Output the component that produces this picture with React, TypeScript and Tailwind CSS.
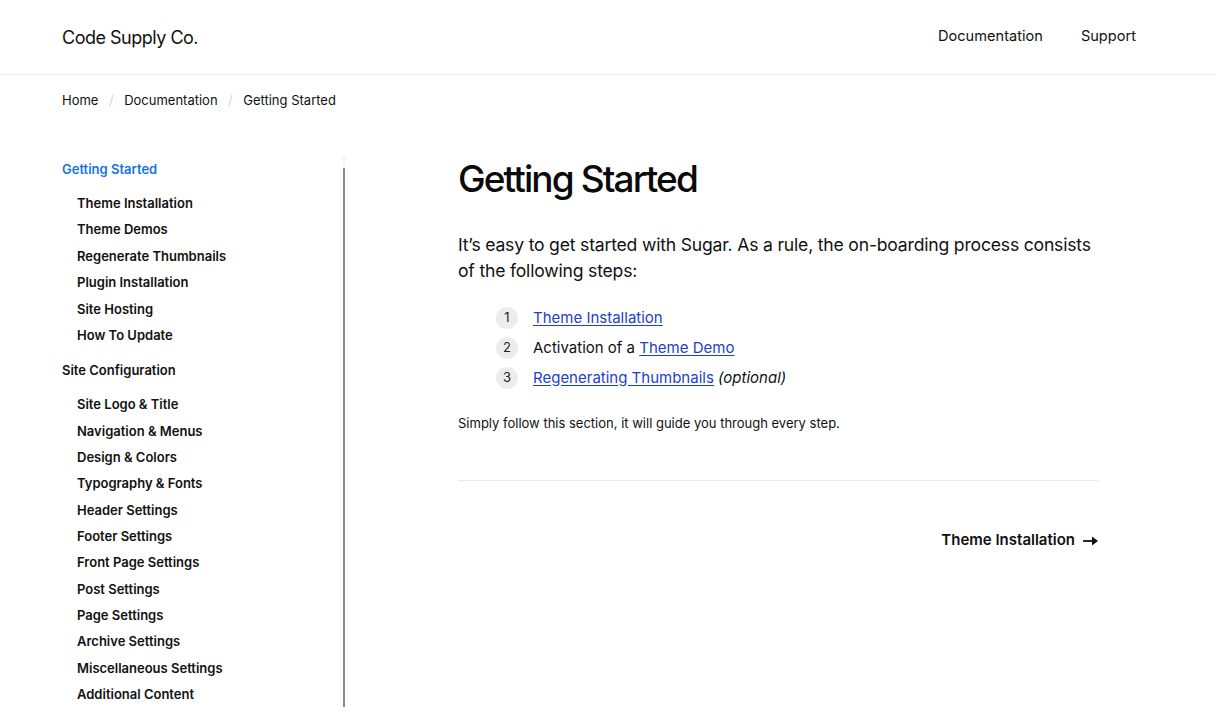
const gettingStarted = [
  "Theme Installation",
  "Theme Demos",
  "Regenerate Thumbnails",
  "Plugin Installation",
  "Site Hosting",
  "How To Update",
];

const siteConfig = [
  "Site Logo & Title",
  "Navigation & Menus",
  "Design & Colors",
  "Typography & Fonts",
  "Header Settings",
  "Footer Settings",
  "Front Page Settings",
  "Post Settings",
  "Page Settings",
  "Archive Settings",
  "Miscellaneous Settings",
  "Additional Content",
];

const Step = ({ n, children }: { n: number; children: React.ReactNode }) => (
  <li className="flex items-center gap-[15px] h-[30px]">
    <span className="flex h-[22px] w-[22px] items-center justify-center rounded-full bg-[#ececef] text-[13px] text-[#222]">
      {n}
    </span>
    <span>{children}</span>
  </li>
);

const App = () => {
  return (
    <div className="min-h-screen w-full bg-white text-[#111] font-['Inter',sans-serif]">
      <header className="flex h-[75px] items-center justify-between border-b border-[#ebebeb] px-[62px]">
        <a href="#" className="text-[18px] tracking-[-0.5px] text-[#111]">
          Code Supply Co.
        </a>
        <nav className="flex items-center gap-[38px] pr-[18px] text-[14.6px] text-[#111]">
          <a href="#">Documentation</a>
          <a href="#">Support</a>
        </nav>
      </header>

      <div className="flex h-[52px] items-center px-[62px] text-[13px] text-[#111]">
        <a href="#">Home</a>
        <span className="mx-[10.5px] text-[#d6d6d6]">/</span>
        <a href="#">Documentation</a>
        <span className="mx-[10.5px] text-[#d6d6d6]">/</span>
        <span>Getting Started</span>
      </div>

      <div className="flex pl-[62px] pt-[29px]">
        <aside className="relative w-[283px] shrink-0 pr-4 text-[13px] font-semibold">
          {/* scroll track on the right edge */}
          <span className="absolute right-0 top-0 h-[12px] w-[2px] bg-[#f3f3f3]" />
          <span className="absolute right-0 top-[12px] bottom-0 w-[2px] bg-[#8a8a8a]" />
          <a href="#" className="block h-[26px] leading-[26px] text-[#1473e6]">
            Getting Started
          </a>
          <ul className="mt-[8px] pl-[15px]">
            {gettingStarted.map(item => (
              <li key={item} className="h-[26.4px] leading-[26.4px]">
                <a href="#">{item}</a>
              </li>
            ))}
          </ul>
          <a href="#" className="mt-[9px] block h-[26px] leading-[26px]">
            Site Configuration
          </a>
          <ul className="mt-[8px] pl-[15px]">
            {siteConfig.map(item => (
              <li key={item} className="h-[26.35px] leading-[26.35px]">
                <a href="#">{item}</a>
              </li>
            ))}
          </ul>
        </aside>

        <main className="ml-[113px] w-[640px]">
          <h1 className="mt-[1px] text-[37px] leading-[44px] font-medium tracking-[-1.9px] text-[#0a0a0a]">
            Getting Started
          </h1>
          <p className="mt-[31px] text-[17.6px] leading-[26px] tracking-[-0.2px] text-[#111]">
            It’s easy to get started with Sugar. As a rule, the on-boarding process consists of the following steps:
          </p>
          <ol className="mt-[19px] pl-[38px] text-[15px]">
            <Step n={1}>
              <a href="#" className="text-[#1d3fc9] underline underline-offset-2">
                Theme Installation
              </a>
            </Step>
            <Step n={2}>
              Activation of a{" "}
              <a href="#" className="text-[#1d3fc9] underline underline-offset-2">
                Theme Demo
              </a>
            </Step>
            <Step n={3}>
              <a href="#" className="text-[#1d3fc9] underline underline-offset-2">
                Regenerating Thumbnails
              </a>{" "}
              <em>(optional)</em>
            </Step>
          </ol>
          <p className="mt-[20px] text-[13px] leading-[20px]">
            Simply follow this section, it will guide you through every step.
          </p>
          <hr className="mt-[47px] border-[#e8e8e8]" />
          <div className="mt-[48px] flex justify-end">
            <a href="#" className="flex items-center gap-[8px] text-[15px] font-semibold">
              Theme Installation
              <svg width="15" height="10" viewBox="0 0 15 10" className="mt-[1px]">
                <path d="M0 4.1h10v1.8H0z" fill="#111" />
                <path d="M9 0.6 15 5 9 9.4z" fill="#111" />
              </svg>
            </a>
          </div>
        </main>
      </div>
    </div>
  );
};

export default App;
